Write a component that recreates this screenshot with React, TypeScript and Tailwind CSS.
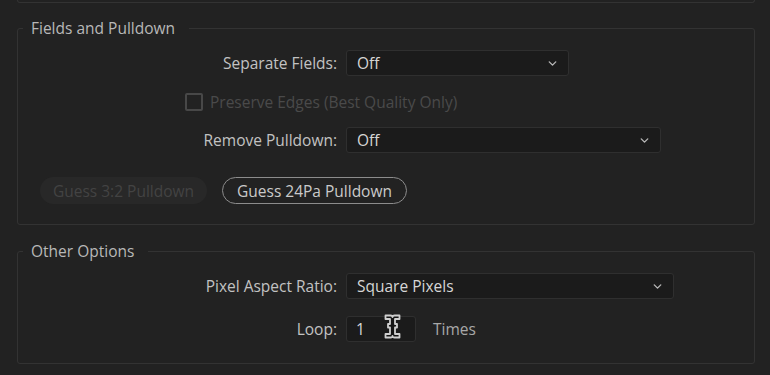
import { ChevronDown } from 'lucide-react'

function Dropdown({ value, width }: { value: string; width: string }) {
  return (
    <div
      className={`${width} h-[26px] flex items-center justify-between pl-[10px] pr-[9px] bg-[#1b1b1b] border border-[#2f2f2f] rounded-[3px]`}
    >
      <span className="text-[#d6d6d6]">{value}</span>
      <ChevronDown className="w-[13px] h-[13px] text-[#b8b8b8]" strokeWidth={2.5} />
    </div>
  )
}

function Row({ label, children }: { label: string; children: React.ReactNode }) {
  return (
    <div className="flex items-center gap-[9px]">
      <div className="w-[319px] text-right text-[#c2c2c2]">{label}</div>
      {children}
    </div>
  )
}

// mouse pointer over the Loop field
function IBeam() {
  return (
    <svg className="absolute left-[37px] top-[-3px]" width="17" height="25" viewBox="0 0 17 25">
      <path
        d="M1.5 1.5 H6.5 Q8.5 1.5 8.5 3 Q8.5 1.5 10.5 1.5 H15.5 V5 H11 V10 H13 V13.5 H11 V20 H15.5 V23.5 H10.5 Q8.5 23.5 8.5 22 Q8.5 23.5 6.5 23.5 H1.5 V20 H6 V13.5 H4 V10 H6 V5 H1.5 Z"
        fill="#151515"
        stroke="#cfcfcf"
        strokeWidth="1.8"
        strokeLinejoin="round"
      />
    </svg>
  )
}

export default function App() {
  return (
    <div className="w-[770px] h-[375px] overflow-hidden bg-[#222222] px-[17px] text-[15.5px] leading-[20px] font-['Open_Sans',sans-serif]">
      {/* bottom edge of the section above */}
      <div className="w-[738px] h-[3px] border-x border-b border-[#333333] rounded-b-[3px]" />

      <fieldset className="w-[738px] mt-[15px] border border-[#333333] rounded-[3px] pb-[20px]">
        <legend className="ml-[5px] pl-[8px] pr-[14px] text-[#b8b8b8]">Fields and Pulldown</legend>

        <div className="mt-[12px] flex flex-col">
          <Row label="Separate Fields:">
            <Dropdown value="Off" width="w-[223px]" />
          </Row>

          <div className="mt-[16px] pl-[167px] flex items-center gap-[7px] text-[#4a4a4a]">
            <div className="w-[18px] h-[18px] border-2 border-[#484848] rounded-[2px]" />
            <span>Preserve Edges (Best Quality Only)</span>
          </div>

          <div className="mt-[15px]">
            <Row label="Remove Pulldown:">
              <Dropdown value="Off" width="w-[315px]" />
            </Row>
          </div>

          <div className="mt-[24px] pl-[22px] flex items-center gap-[15px]">
            <div className="w-[167px] h-[27px] rounded-full bg-[#282828] flex items-center justify-center text-[#434343]">
              Guess 3:2 Pulldown
            </div>
            <div className="w-[185px] h-[27px] rounded-full border-[1.5px] border-[#8c8c8c] flex items-center justify-center text-[#cacaca]">
              Guess 24Pa Pulldown
            </div>
          </div>
        </div>
      </fieldset>

      <fieldset className="w-[738px] mt-[16px] border border-[#333333] rounded-[3px] pb-[21px]">
        <legend className="ml-[5px] pl-[8px] pr-[14px] text-[#b8b8b8]">Other Options</legend>

        <div className="mt-[12px] flex flex-col">
          <Row label="Pixel Aspect Ratio:">
            <Dropdown value="Square Pixels" width="w-[328px]" />
          </Row>

          <div className="mt-[17px]">
            <Row label="Loop:">
              <div className="relative w-[70px] h-[26px] flex items-center pl-[9px] bg-[#1b1b1b] border border-[#2f2f2f] rounded-[3px] text-[#d6d6d6]">
                1
                <IBeam />
              </div>
              <span className="ml-[8px] text-[#a8a8a8]">Times</span>
            </Row>
          </div>
        </div>
      </fieldset>
    </div>
  )
}
